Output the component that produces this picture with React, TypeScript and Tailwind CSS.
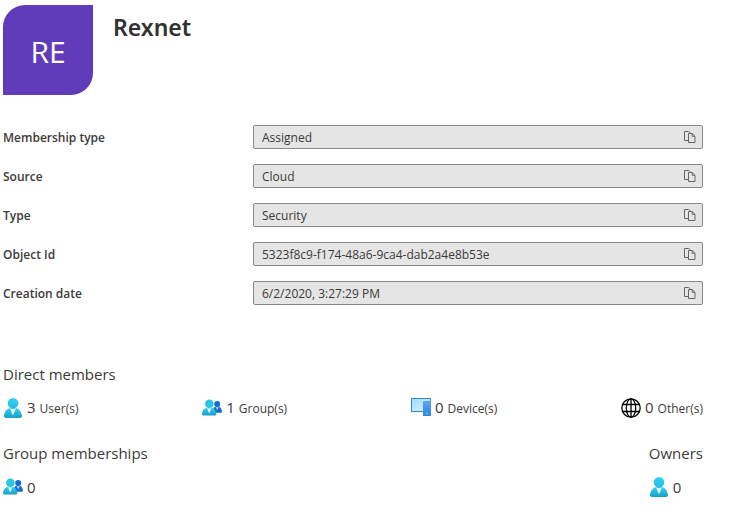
import React, { useId } from "react";

function UserIcon() {
  const id = useId();
  return (
    <svg width="20" height="20" viewBox="0 0 20 20" aria-hidden="true" className="shrink-0">
      <defs>
        <linearGradient id={id} x1="0" y1="0" x2="0" y2="1">
          <stop offset="0" stopColor="#32d4f5" />
          <stop offset="1" stopColor="#1c9cc6" />
        </linearGradient>
        <linearGradient id={id + "h"} x1="0" y1="0" x2="0" y2="1">
          <stop offset="0" stopColor="#32d4f5" />
          <stop offset="1" stopColor="#25b8e0" />
        </linearGradient>
      </defs>
      <path d="M17.1 20a1.9 1.9 0 0 0 1.9-2.1C18.300 13.300 15.600 9.800 10 9.800S1.600 12.800 1 17.900A1.900 1.900 0 0 0 2.900 20z" fill={`url(#${id})`} />
      <path d="M10 11c-1.200 0-2.200-.3-3.100-.8L9.900 17.500l3.200-7.300c-.9.500-1.900.8-3.100.8z" fill="#fff" opacity=".85" />
      <circle cx="10" cy="5.300" r="5.300" fill={`url(#${id}h)`} />
    </svg>
  );
}

function GroupIcon() {
  const id = useId();
  return (
    <svg width="20" height="20" viewBox="0 0 20 20" aria-hidden="true" className="shrink-0">
      <defs>
        <linearGradient id={id} x1="0" y1="0" x2="0" y2="1">
          <stop offset="0" stopColor="#32d4f5" />
          <stop offset="1" stopColor="#1c9cc6" />
        </linearGradient>
      </defs>
      <path d="M18.800 14.800a1.200 1.200 0 0 0 1.200-1.400c-.4-2.900-1.900-5.200-4.700-5.200-3 0-4.700 2-5 6.600z" fill="#0f6fd0" />
      <path d="M15.200 9.200c-.7 0-1.200-.2-1.700-.5l1.700 3.600 1.700-3.600c-.5.300-1 .5-1.700.5z" fill="#fff" opacity=".7" />
      <circle cx="15.200" cy="6" r="3" fill="#0f6fd0" />
      <path d="M12.800 17.500a1.500 1.500 0 0 0 1.500-1.700C13.800 12.200 11.700 9.400 7.200 9.400S.5 11.800 0 15.800A1.500 1.500 0 0 0 1.500 17.500z" fill={`url(#${id})`} />
      <path d="M7.200 10.400c-.9 0-1.700-.2-2.400-.6l2.400 5.700 2.400-5.700c-.7.400-1.500.6-2.400.6z" fill="#fff" opacity=".85" />
      <circle cx="7.300" cy="5.700" r="4.300" fill="#2cc4e8" />
    </svg>
  );
}

function DeviceIcon() {
  const id = useId();
  return (
    <svg width="20" height="20" viewBox="0 0 20 20" aria-hidden="true" className="shrink-0">
      <defs>
        <linearGradient id={id} x1="0" y1="0" x2="0" y2="1">
          <stop offset="0" stopColor="#5ea0ef" />
          <stop offset="1" stopColor="#2f86e6" />
        </linearGradient>
        <linearGradient id={id + "s"} x1="0" y1="0" x2="1" y2="1">
          <stop offset="0" stopColor="#9fdcfc" />
          <stop offset="1" stopColor="#d8f6ff" />
        </linearGradient>
      </defs>
      <rect x="0" y="0" width="20" height="14" rx=".6" fill="#2a86dc" />
      <rect x="1" y="1" width="18" height="12" fill={`url(#${id}s)`} />
      <rect x="12" y="3" width="8" height="15" rx=".6" fill={`url(#${id})`} />
      <circle cx="16" cy="15.500" r=".7" fill="#b8dcff" />
    </svg>
  );
}

function GlobeIcon() {
  return (
    <svg width="20" height="20" viewBox="0 0 20 20" fill="none" stroke="#000" strokeWidth="1.300" aria-hidden="true" className="shrink-0">
      <circle cx="10" cy="10" r="9.200" />
      <ellipse cx="10" cy="10" rx="4.700" ry="9.200" />
      <path d="M10 .8v18.400M1.800 6.500h16.400M1.800 13.500h16.400" />
    </svg>
  );
}

function CopyIcon() {
  return (
    <svg width="12" height="12" viewBox="0 0 12 12" fill="none" stroke="#666" aria-hidden="true">
      <path d="M4 9.500H.5v-9h4.200L6.500 2" />
      <path d="M4.500 2.500h3.700l2.800 2.800v6.200H4.500z" />
      <path d="M8.200 2.500v2.800H11" />
    </svg>
  );
}

const fields = [
  { id: "membership-type", label: "Membership type", value: "Assigned" },
  { id: "source", label: "Source", value: "Cloud" },
  { id: "type", label: "Type", value: "Security" },
  { id: "object-id", label: "Object Id", value: "5323f8c9-f174-48a6-9ca4-dab2a4e8b53e" },
  { id: "creation-date", label: "Creation date", value: "6/2/2020, 3:27:29 PM" },
];

const members = [
  { icon: <UserIcon />, count: 3, label: "User(s)" },
  { icon: <GroupIcon />, count: 1, label: "Group(s)" },
  { icon: <DeviceIcon />, count: 0, label: "Device(s)" },
  { icon: <GlobeIcon />, count: 0, label: "Other(s)" },
];

function Stat({ icon, count, label }: { icon: React.ReactNode; count: number; label?: string }) {
  return (
    <div className="flex h-6 items-center gap-1">
      {icon}
      <span className="flex items-baseline gap-1">
        <span className="text-[15px] leading-6">{count}</span>
        {label && <span className="text-xs leading-6">{label}</span>}
      </span>
    </div>
  );
}

export default function App() {
  return (
    <main className="bg-white pt-[5px] pr-8 pl-[3px] font-['Open_Sans','Noto_Sans',sans-serif] text-[#3b3a39]">
      <header className="flex items-start gap-5">
        <div className="flex size-[90px] items-center justify-center rounded-tl-[22px] rounded-br-[22px] bg-[#603cba] pt-0.5 text-[30px] text-white">
          RE
        </div>
        <h1 className="pt-1.5 font-['Noto_Sans','Open_Sans',sans-serif] text-[23px] leading-8 font-semibold text-[#323130]">Rexnet</h1>
      </header>

      <div className="mt-[30px] flex flex-col gap-[15px]">
        {fields.map((f) => (
          <div key={f.id} className="grid grid-cols-[250px_1fr] items-center">
            <label htmlFor={f.id} className="pt-0.5 text-xs font-semibold">
              {f.label}
            </label>
            <div className="flex h-6 items-center rounded-xs border border-[#8a8886] bg-[#e5e5e5] pr-[6px] pl-2">
              <input id={f.id} readOnly value={f.value} className="min-w-0 flex-1 bg-transparent pt-0.5 text-xs outline-none" />
              <button type="button" aria-label={`Copy ${f.label}`}>
                <CopyIcon />
              </button>
            </div>
          </div>
        ))}
      </div>

      <section className="mt-[57px]">
        <h2 className="text-[15px] leading-6">Direct members</h2>
        <div className="mt-[10px] flex justify-between">
          {members.map((m) => (
            <Stat key={m.label} {...m} />
          ))}
        </div>
      </section>

      <div className="mt-[21px] flex justify-between">
        <section>
          <h2 className="text-[15px] leading-6">Group memberships</h2>
          <div className="mt-[10px]">
            <Stat icon={<GroupIcon />} count={0} />
          </div>
        </section>
        <section>
          <h2 className="text-[15px] leading-6">Owners</h2>
          <div className="mt-[10px]">
            <Stat icon={<UserIcon />} count={0} />
          </div>
        </section>
      </div>
    </main>
  );
}
